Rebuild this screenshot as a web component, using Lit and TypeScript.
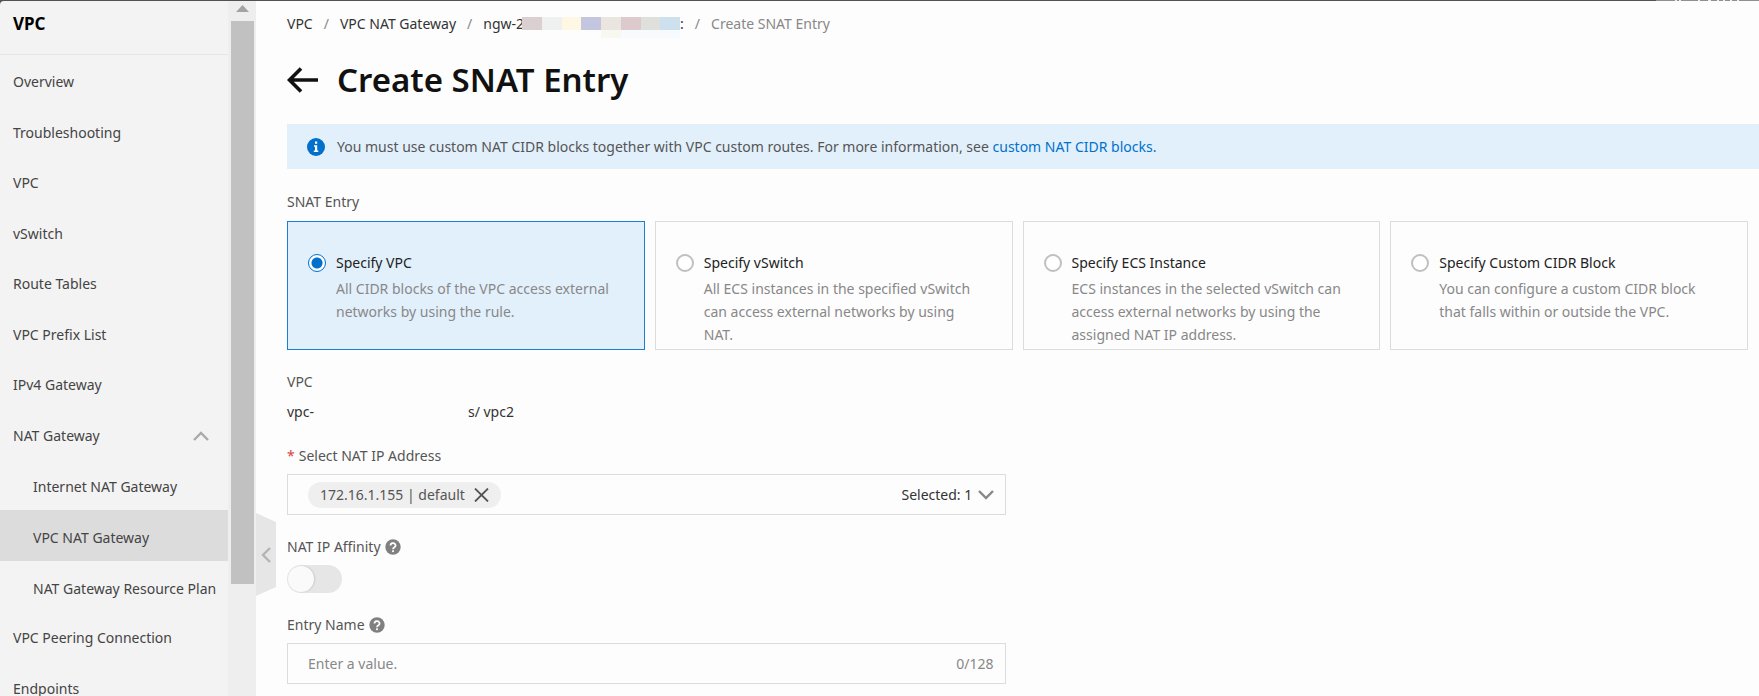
import { LitElement, html, css, svg, nothing } from "lit";
import { customElement, state } from "lit/decorators.js";
import { classMap } from "lit/directives/class-map.js";

interface NavItem {
  text: string;
  children?: { text: string; active?: boolean }[];
}

const NAV: NavItem[] = [
  { text: "Overview" },
  { text: "Troubleshooting" },
  { text: "VPC" },
  { text: "vSwitch" },
  { text: "Route Tables" },
  { text: "VPC Prefix List" },
  { text: "IPv4 Gateway" },
  {
    text: "NAT Gateway",
    children: [
      { text: "Internet NAT Gateway" },
      { text: "VPC NAT Gateway", active: true },
      { text: "NAT Gateway Resource Plan" },
    ],
  },
  { text: "VPC Peering Connection" },
  { text: "Endpoints" },
];

const ENTRY_TYPES = [
  { id: "vpc", title: "Specify VPC", text: "All CIDR blocks of the VPC access external networks by using the rule." },
  { id: "vswitch", title: "Specify vSwitch", text: "All ECS instances in the specified vSwitch can access external networks by using NAT." },
  { id: "ecs", title: "Specify ECS Instance", text: "ECS instances in the selected vSwitch can access external networks by using the assigned NAT IP address." },
  { id: "cidr", title: "Specify Custom CIDR Block", text: "You can configure a custom CIDR block that falls within or outside the VPC." },
];

const chevron = (d: string) => svg`<path d=${d} fill="none" stroke="currentColor" stroke-width="2.400" />`;

@customElement("side-nav")
export class SideNav extends LitElement {
  @state() private open = true;

  static styles = css`
    :host {
      display: flex;
      position: relative;
      width: 256px;
      flex: none;
      border-top-left-radius: 4px;
      background: #f3f3f3;
      color: #444;
      font-size: 14px;
    }
    .menu {
      flex: 1;
      min-width: 0;
      overflow: hidden;
    }
    .title {
      margin: 0;
      padding: 0 13px;
      line-height: 46px;
      height: 53px;
      border-bottom: 1px solid #e6e6e6;
      color: #000;
      font-size: 17px;
      font-weight: 700;
    }
    ul {
      list-style: none;
      margin: 0;
      padding: 0;
    }
    .top {
      padding-top: 2px;
    }
    .top > li:nth-child(odd) {
      padding-bottom: 1px;
    }
    a,
    .group {
      display: flex;
      align-items: center;
      justify-content: space-between;
      box-sizing: border-box;
      width: 100%;
      height: 50px;
      padding: 0 19px 0 13px;
      border: 0;
      background: none;
      color: inherit;
      font: inherit;
      text-decoration: none;
      white-space: nowrap;
    }
    .sub {
      margin-top: -2px;
      padding-bottom: 1px;
    }
    .sub a {
      height: 51px;
      padding: 4px 0 0 33px;
    }
    .sub a.active {
      background: #dcdcdc;
    }
    .group svg {
      color: #aaa;
    }
    .bar {
      display: flex;
      flex-direction: column;
      align-items: center;
      width: 28px;
      background: #eee;
    }
    .bar svg {
      flex: none;
      margin: 4px 0;
    }
    .thumb {
      width: 23px;
      height: 81%;
      background: #c1c1c1;
    }
    .collapse {
      position: absolute;
      left: 100%;
      top: 512px;
      width: 20px;
      height: 83px;
      padding: 0;
      border: 0;
      background: #e6e6e6;
      color: #b4b4b4;
      clip-path: polygon(0 0, 100% 9px, 100% 74px, 0 100%);
    }
    .collapse svg {
      display: block;
      margin: 0 auto;
    }
  `;

  render() {
    return html`
      <nav class="menu" aria-label="VPC">
        <h2 class="title">VPC</h2>
        <ul class="top">
          ${NAV.map(
            (item) => html`<li>
              ${item.children
                ? html`<button class="group" aria-expanded=${this.open} @click=${() => (this.open = !this.open)}>
                      ${item.text}
                      <svg width="16" height="10" viewBox="0 0 16 10">${chevron(this.open ? "M1 9 8 2l7 7" : "M1 1l7 7 7-7")}</svg>
                    </button>
                    ${this.open
                      ? html`<ul class="sub">
                          ${item.children.map((c) => html`<li><a href="#" class=${classMap({ active: !!c.active })}>${c.text}</a></li>`)}
                        </ul>`
                      : nothing}`
                : html`<a href="#">${item.text}</a>`}
            </li>`
          )}
        </ul>
      </nav>
      <div class="bar">
        <svg width="13" height="12" viewBox="0 0 13 12"><path d="M0 7 6.500 0 13 7z" fill="#a3a3a3" /></svg>
        <div class="thumb"></div>
      </div>
      <button class="collapse" aria-label="Collapse menu">
        <svg width="10" height="16" viewBox="0 0 10 16">${chevron("M9 1 2 8l7 7")}</svg>
      </button>
    `;
  }
}

@customElement("help-icon")
export class HelpIcon extends LitElement {
  static styles = css`
    :host {
      display: inline-flex;
    }
  `;
  render() {
    return html`<svg width="16" height="16" viewBox="0 0 16 16" role="img" aria-label="Help">
      <circle cx="8" cy="8" r="7.700" fill="#808080" />
      <path d="M5.500 6.400a2.500 2.300 0 1 1 3.700 2Q8 9 8 10.200" fill="none" stroke="#fff" stroke-width="1.700" />
      <rect x="7.100" y="11.300" width="1.800" height="1.800" fill="#fff" />
    </svg>`;
  }
}

@customElement("app-root")
export class AppRoot extends LitElement {
  @state() private entryType = "vpc";
  @state() private name = "";

  static styles = css`
    :host {
      display: flex;
      box-sizing: border-box;
      height: 100vh;
      overflow: hidden;
      padding-top: 1px;
      background: linear-gradient(
        to left,
        #909090 20px,
        #eee 20px 22px,
        #909090 22px 27px,
        #eee 27px 29px,
        #909090 29px 34px,
        #eee 34px 36px,
        #909090 36px 40px,
        #eee 40px 42px,
        #909090 42px 48px,
        #eee 48px 51px,
        #909090 51px 59px,
        #eee 59px 61px,
        #909090 61px 78px,
        #eee 78px 80px,
        #909090 80px 82px,
        #eee 82px 84px,
        #909090 84px 103px,
        #555053 103px
      );
      color: #333;
      font-family: "Noto Sans", "Open Sans", sans-serif;
      font-size: 14px;
      line-height: 20px;
    }
    main {
      flex: 1;
      min-width: 0;
      padding: 13px 0 0 31px;
      background: #fdfdfd;
    }
    .crumbs {
      display: flex;
      align-items: center;
      gap: 11px;
      color: #888;
      white-space: nowrap;
    }
    .crumbs a {
      display: flex;
      align-items: center;
      color: #333;
      text-decoration: none;
    }
    .mask {
      display: flex;
      height: 13px;
      width: 158px;
      margin: 0 0 2px -2px;
    }
    .mask i {
      flex: 1;
    }
    .mask i:nth-child(5) {
      box-shadow: 0 8px #f9f8f0;
    }
    .mask i:nth-child(n + 6) {
      box-shadow: 0 8px #f7fbfd;
    }
    .heading {
      display: flex;
      align-items: center;
      gap: 18px;
      margin: 22px 0 20px;
      color: #111;
    }
    .back {
      display: flex;
      padding: 0;
      border: 0;
      background: none;
      color: inherit;
    }
    h1 {
      margin: 0;
      font-size: 33px;
      line-height: 48px;
      font-weight: 600;
    }
    .notice {
      display: flex;
      align-items: center;
      gap: 12px;
      padding: 12px 20px;
      line-height: 21px;
      background: #e2f0fc;
      color: #555;
    }
    .notice svg {
      flex: none;
    }
    .notice a {
      color: #0070cc;
      text-decoration: none;
    }
    form {
      display: flex;
      flex-direction: column;
      gap: 22px;
      padding: 23px 11px 0 0;
    }
    fieldset {
      border: 0;
      margin: 0;
      padding: 0;
      min-width: 0;
    }
    legend {
      padding: 0;
      margin-bottom: 9px;
      color: #555;
    }
    .cards {
      display: grid;
      grid-template-columns: repeat(4, minmax(0, 1fr));
      gap: 10px;
    }
    .card {
      display: grid;
      grid-template-columns: 18px 1fr;
      align-content: start;
      column-gap: 10px;
      row-gap: 3px;
      padding: 29px 26px 3px 20px;
      border: 1px solid #dcdcdc;
      line-height: 23px;
      color: #888;
    }
    .card.on {
      border-color: #1c7fd6;
      background: #e2f0fc;
    }
    .card b {
      color: #222;
      font-weight: 400;
    }
    .card span {
      grid-column: 2;
    }
    .card input {
      appearance: none;
      align-self: center;
      width: 18px;
      height: 18px;
      margin: 0;
      border: 2px solid #c0c0c0;
      border-radius: 50%;
      background: #fff;
    }
    .card input:checked {
      border: 1px solid #0070cc;
      background: radial-gradient(circle, #0070cc 5px, #fff 6px);
    }
    .field {
      display: flex;
      flex-direction: column;
      align-items: flex-start;
      gap: 8px;
    }
    .label {
      display: flex;
      align-items: center;
      gap: 4px;
      color: #555;
    }
    .req {
      color: #e04040;
    }
    .value {
      display: flex;
      line-height: 24px;
    }
    .gap {
      width: 154px;
    }
    .box {
      display: flex;
      align-items: center;
      justify-content: space-between;
      box-sizing: border-box;
      width: calc(50% - 12px);
      height: 41px;
      padding: 0 11px 0 20px;
      border: 1px solid #dcdcdc;
    }
    .tag {
      display: flex;
      align-items: center;
      gap: 9px;
      height: 26px;
      padding: 0 12px;
      border-radius: 13px;
      background: #efefef;
      color: #555;
    }
    .tag button {
      display: flex;
      padding: 0;
      border: 0;
      background: none;
      color: #555;
    }
    .pick {
      display: flex;
      align-items: center;
      gap: 5px;
      color: #888;
    }
    select {
      appearance: none;
      padding: 0;
      border: 0;
      background: none;
      color: #333;
      font: inherit;
    }
    .switch {
      appearance: none;
      width: 55px;
      height: 28px;
      margin: 0;
      padding: 1px;
      border-radius: 14px;
      background: #e6e6e6;
    }
    .switch::before {
      content: "";
      display: block;
      width: 26px;
      height: 26px;
      border-radius: 50%;
      background: #fafafa;
      box-shadow: 1px 0 2px rgba(0, 0, 0, 0.12);
    }
    .switch:checked {
      background: #0070cc;
    }
    .switch:checked::before {
      margin-left: auto;
    }
    .text {
      flex: 1;
      min-width: 0;
      padding: 0;
      border: 0;
      outline: 0;
      background: none;
      color: #333;
      font: inherit;
    }
    .text::placeholder,
    .count {
      color: #888;
    }
  `;

  render() {
    const mask = ["#dad0d2", "#eff0f0", "#fdf7e4", "#c4c6e0", "#ebe5e0", "#dccacd", "#dfdfdb", "#cde0ee"];
    return html`
      <side-nav></side-nav>
      <main>
        <nav class="crumbs" aria-label="Breadcrumb">
          <a href="#">VPC</a><span>/</span>
          <a href="#">VPC NAT Gateway</a><span>/</span>
          <a href="#">ngw-2<span class="mask">${mask.map((c) => html`<i style="background:${c}"></i>`)}</span>:</a><span>/</span>
          <span>Create SNAT Entry</span>
        </nav>
        <div class="heading">
          <button class="back" aria-label="Back">
            <svg width="32" height="26" viewBox="0 0 32 26"><path d="M14 1.500 2.500 13 14 24.500M3 13H31" fill="none" stroke="currentColor" stroke-width="3.600" /></svg>
          </button>
          <h1>Create SNAT Entry</h1>
        </div>
        <div class="notice">
          <svg width="18" height="18" viewBox="0 0 18 18">
            <circle cx="9" cy="9" r="9" fill="#0070cc" />
            <path d="M8 3.500h2.200v2.200H8zM7 7.200h3.200v5.200h1.100V14H6.800v-1.600H8V8.700H7z" fill="#fff" />
          </svg>
          <span>You must use custom NAT CIDR blocks together with VPC custom routes. For more information, see <a href="#">custom NAT CIDR blocks.</a></span>
        </div>
        <form @submit=${(e: Event) => e.preventDefault()}>
          <fieldset>
            <legend>SNAT Entry</legend>
            <div class="cards">
              ${ENTRY_TYPES.map(
                (t) => html`<label class=${classMap({ card: true, on: t.id === this.entryType })}>
                  <input type="radio" name="type" .checked=${t.id === this.entryType} @change=${() => (this.entryType = t.id)} />
                  <b>${t.title}</b>
                  <span>${t.text}</span>
                </label>`
              )}
            </div>
          </fieldset>
          <div class="field">
            <span class="label">VPC</span>
            <span class="value">vpc-<span class="gap"></span>s/ vpc2</span>
          </div>
          <div class="field">
            <label class="label" for="ip"><span class="req">*</span>Select NAT IP Address</label>
            <div class="box">
              <span class="tag">172.16.1.155 | default
                <button type="button" aria-label="Remove">
                  <svg width="15" height="14" viewBox="0 0 15 14"><path d="M1 .500 14 13.500M14 .500 1 13.500" stroke="currentColor" stroke-width="1.800" /></svg>
                </button>
              </span>
              <span class="pick">
                <select id="ip"><option>Selected: 1</option></select>
                <svg width="16" height="10" viewBox="0 0 16 10">${chevron("M1 1l7 7 7-7")}</svg>
              </span>
            </div>
          </div>
          <div class="field">
            <label class="label" for="affinity">NAT IP Affinity<help-icon></help-icon></label>
            <input class="switch" id="affinity" type="checkbox" role="switch" />
          </div>
          <div class="field">
            <label class="label" for="name">Entry Name<help-icon></help-icon></label>
            <div class="box">
              <input class="text" id="name" type="text" maxlength="128" placeholder="Enter a value."
                .value=${this.name} @input=${(e: Event) => (this.name = (e.target as HTMLInputElement).value)} />
              <span class="count">${this.name.length}/128</span>
            </div>
          </div>
        </form>
      </main>
    `;
  }
}
